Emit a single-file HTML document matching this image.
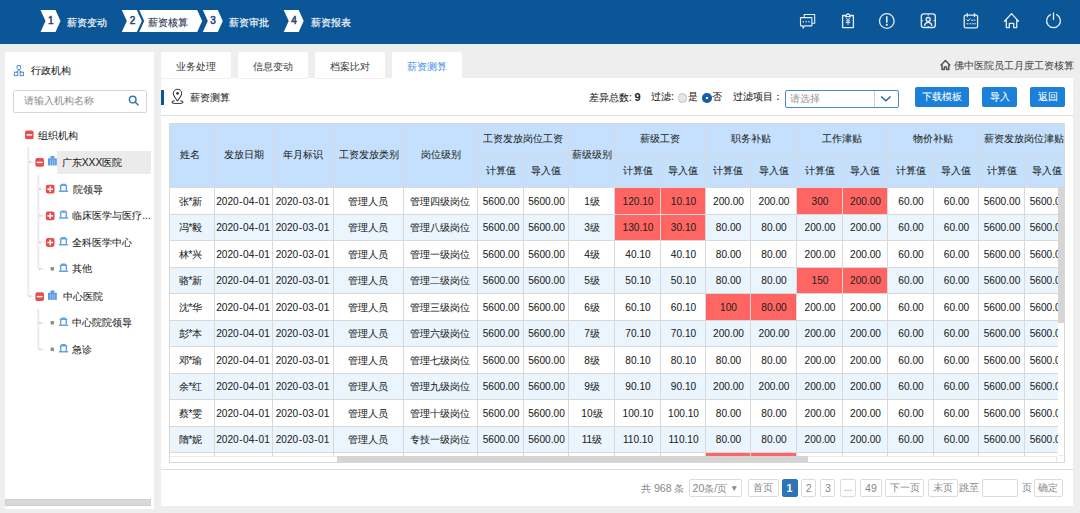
<!DOCTYPE html>
<html><head><meta charset="utf-8"><style>
html,body{margin:0;padding:0;}
body{width:1080px;height:513px;overflow:hidden;background:#eeeeee;position:relative;font-family:"Liberation Sans",sans-serif;font-size:10px;color:#222;}
.a{position:absolute;}
.t{position:absolute;white-space:nowrap;-webkit-text-stroke:0.06px currentColor;}
.n{font-size:10.6px;-webkit-text-stroke:0.05px currentColor;}
.ns,.ns .n{-webkit-text-stroke:0;}
.hy{display:inline-block;width:4.3px;text-align:center;}
.tb .n{font-size:10.15px;}
svg{position:absolute;overflow:visible;}
</style></head><body>

<div class="a" style="left:0;top:0;width:1080px;height:44px;background:#0b5697"></div>
<svg width="1080" height="44" style="left:0;top:0">
<polygon points="40.5,10 55.5,10 60.5,21.0 55.5,32 40.5,32 45.5,21.0" fill="#fff"/>
<polygon points="121.8,10 136.8,10 141.8,21.0 136.8,32 121.8,32 126.8,21.0" fill="#fff"/>
<polygon points="202.8,10 217.8,10 222.8,21.0 217.8,32 202.8,32 207.8,21.0" fill="#fff"/>
<polygon points="283.7,10 298.7,10 303.7,21.0 298.7,32 283.7,32 288.7,21.0" fill="#fff"/>
<polygon points="139.2,10 197.2,10 202.2,21 197.2,32 139.2,32 144.2,21" fill="#fff"/>
</svg>
<div class="t" style="left:40.8px;width:20px;text-align:center;top:12.6px;line-height:16px;font-size:10px;-webkit-text-stroke:0.5px currentColor;color:#1f4477">1</div>
<div class="t" style="left:67px;top:14.8px;line-height:16px;color:#fff;-webkit-text-stroke:0.15px currentColor">薪资变动</div>
<div class="t" style="left:122.60000000000002px;width:20px;text-align:center;top:12.6px;line-height:16px;font-size:10px;-webkit-text-stroke:0.5px currentColor;color:#1f4477">2</div>
<div class="t" style="left:148px;top:14.8px;line-height:16px;color:#2b3a4e;-webkit-text-stroke:0.15px currentColor">薪资核算</div>
<div class="t" style="left:203.10000000000002px;width:20px;text-align:center;top:12.6px;line-height:16px;font-size:10px;-webkit-text-stroke:0.5px currentColor;color:#1f4477">3</div>
<div class="t" style="left:229px;top:14.8px;line-height:16px;color:#fff;-webkit-text-stroke:0.15px currentColor">薪资审批</div>
<div class="t" style="left:284.0px;width:20px;text-align:center;top:12.6px;line-height:16px;font-size:10px;-webkit-text-stroke:0.5px currentColor;color:#1f4477">4</div>
<div class="t" style="left:310.5px;top:14.8px;line-height:16px;color:#fff;-webkit-text-stroke:0.15px currentColor">薪资报表</div>
<svg width="1080" height="44" style="left:0;top:0" fill="none" stroke="#e8eef6" stroke-width="1.3" stroke-linejoin="round" stroke-linecap="round">
<path d="M804.2,16.8 V14.5 H814.7 V23.3 H812.3" stroke-width="1.1"/>
<path d="M800.9,17.6 H811.6 Q811.9,17.6 811.9,17.9 V25.6 Q811.9,25.9 811.6,25.9 H804.6 L803,28.2 V25.9 H800.9 Q800.5,25.9 800.5,25.6 V17.9 Q800.5,17.6 800.9,17.6 Z" stroke-width="1.1"/>
</svg>
<svg width="1080" height="44" style="left:0;top:0" fill="#e8eef6">
<circle cx="803.3" cy="21.8" r="0.75"/>
<circle cx="806.1" cy="21.8" r="0.75"/>
<circle cx="808.9" cy="21.8" r="0.75"/>
</svg>
<svg width="1080" height="44" style="left:0;top:0" fill="none" stroke="#e8eef6" stroke-width="1.3" stroke-linejoin="round" stroke-linecap="round">
<path d="M845.5,15.5 H842.6 V27.6 H853.4 V15.5 H850.5"/>
<path d="M845.5,16.6 L846.5,14.8 Q848,12.8 849.5,14.8 L850.5,16.6 Z"/>
<path d="M846.4,18.2 L848,20.4 L849.6,18.2 M848,20.4 V24.6 M846.2,20.9 H849.8 M846.2,22.6 H849.8" stroke-width="0.9"/>
<circle cx="886.8" cy="21" r="7.3"/>
<path d="M886.8,16.8 V22.2" stroke-width="1.6"/>
<circle cx="886.8" cy="24.8" r="0.5" stroke-width="1.2"/>
<rect x="921.3" y="13.9" width="14" height="13.6" rx="2.6"/>
<circle cx="928.2" cy="19.5" r="2"/>
<path d="M924.6,25.4 Q925.2,22.3 928.2,22.3 Q931.2,22.3 931.8,25.4"/>
<path d="M928.2,14.2 V15.3 M921.6,20.7 H922.7 M935,20.7 H933.9 M928.2,27.3 V26.4" stroke-width="1"/>
<rect x="964.2" y="15.2" width="13.4" height="12.6" rx="1.6"/>
<path d="M967.3,13.6 V16.6 M974.5,13.6 V16.6" />
<path d="M966.8,19.8 L968,21 L970,18.8 M971.5,20.2 H972.6 M974,20.2 H975.1 M966.8,23.8 H968 M969.8,23.8 H970.9 M972.6,23.8 H973.7 M975,23.8 H975.6" stroke-width="1"/>
<path d="M1004.5,21.2 L1011.5,13.6 L1018.5,21.2 M1006.3,19.5 V27.6 H1009.3 V23.4 H1013.7 V27.6 H1016.7 V19.5"/>
<path d="M1050.4,14.6 A6.9,6.9 0 1,0 1056.6,14.6" stroke-width="1.3"/>
<path d="M1053.5,12.9 V19.6" stroke-width="1.3"/>
</svg>
<div class="a" style="left:5px;top:52px;width:149px;height:457px;background:#fff"></div>
<svg width="160" height="120" style="left:0;top:0" fill="none" stroke="#4f8cc9" stroke-width="1">
<path d="M17.1,65.6 H20.6 V68.4 Q20.6,69.6 18.85,69.6 Q17.1,69.6 17.1,68.4 Z"/><rect x="14.4" y="72.2" width="3.3" height="3.4"/><rect x="20.1" y="72.2" width="3.3" height="3.4"/>
<path d="M18.85,69.6 V70.4 L16.2,72.2 M18.85,70.4 L21.6,72.2"/>
</svg>
<div class="t" style="left:31px;top:63px;line-height:16px;font-size:10.3px;color:#222">行政机构</div>
<div class="a" style="left:12.5px;top:90px;width:132px;height:20.5px;border:1px solid #d6d6d6;border-radius:2px;background:#fff"></div>
<div class="t ns" style="left:24.3px;top:93px;line-height:16px;font-size:10.3px;color:#8a8a8a">请输入机构名称</div>
<svg width="160" height="120" style="left:0;top:0" fill="none" stroke="#3a78b8" stroke-width="1.5" stroke-linecap="round">
<circle cx="132.7" cy="99.6" r="3.3"/><path d="M135.2,102.1 L138.2,105"/>
</svg>
<div class="a" style="left:57px;top:151px;width:94px;height:23px;background:#ebebeb"></div>
<svg width="160" height="513" style="left:0;top:0"><rect x="27.3" y="147" width="2" height="149.5" fill="#ececec"/><rect x="37.3" y="174" width="2" height="95" fill="#ececec"/><rect x="37.3" y="309" width="2" height="40.5" fill="#ececec"/><rect x="29.3" y="161.4" width="5.5" height="1.2" fill="#efefef"/><rect x="29" y="161" width="2.2" height="2" fill="#f8caca"/><rect x="29.3" y="295.7" width="5.5" height="1.2" fill="#efefef"/><rect x="29" y="295.3" width="2.2" height="2" fill="#f8caca"/><rect x="39.3" y="188.4" width="5.5" height="1.2" fill="#efefef"/><rect x="39" y="188" width="2.2" height="2" fill="#f8caca"/><rect x="39.3" y="215.1" width="5.5" height="1.2" fill="#efefef"/><rect x="39" y="214.7" width="2.2" height="2" fill="#f8caca"/><rect x="39.3" y="241.70000000000002" width="5.5" height="1.2" fill="#efefef"/><rect x="39" y="241.3" width="2.2" height="2" fill="#f8caca"/><rect x="39.3" y="268.2" width="5.5" height="1.2" fill="#efefef"/><rect x="39" y="267.8" width="2.2" height="2" fill="#f8caca"/><rect x="39.3" y="322.2" width="5.5" height="1.2" fill="#efefef"/><rect x="39" y="321.8" width="2.2" height="2" fill="#f8caca"/><rect x="39.3" y="348.7" width="5.5" height="1.2" fill="#efefef"/><rect x="39" y="348.3" width="2.2" height="2" fill="#f8caca"/><rect x="25" y="130.5" width="8.6" height="8.8" rx="1.8" fill="#e45050"/><rect x="26.5" y="134.2" width="5.6" height="1.4" fill="#fff"/><rect x="35.4" y="158" width="8.6" height="8.8" rx="1.8" fill="#e45050"/><rect x="36.9" y="161.7" width="5.6" height="1.4" fill="#fff"/><rect x="50.5" y="156" width="3.9" height="2.4" fill="#5b9be0"/><rect x="48" y="158.3" width="8.8" height="7.1" fill="#5b9be0"/><rect x="50.3" y="159.6" width="0.6" height="5.8" fill="#b9d6f3"/><rect x="52.3" y="159.6" width="0.6" height="5.8" fill="#b9d6f3"/><rect x="54.3" y="159.6" width="0.6" height="5.8" fill="#b9d6f3"/><rect x="45.9" y="184.8" width="8.6" height="8.8" rx="1.8" fill="#e45050"/><rect x="47.4" y="188.5" width="5.6" height="1.4" fill="#fff"/><rect x="49.5" y="186.4" width="1.4" height="5.6" fill="#fff"/><polygon points="61.699999999999996,183.8 65.3,183.8 67.9,186.10000000000002 59.1,186.10000000000002" fill="#62a1e2"/><rect x="60.0" y="185.8" width="1.4" height="5" fill="#62a1e2"/><rect x="65.6" y="185.8" width="1.4" height="5" fill="#62a1e2"/><rect x="58.8" y="190.60000000000002" width="9.4" height="1.5" rx="0.7" fill="#62a1e2"/><rect x="45.9" y="211.5" width="8.6" height="8.8" rx="1.8" fill="#e45050"/><rect x="47.4" y="215.2" width="5.6" height="1.4" fill="#fff"/><rect x="49.5" y="213.1" width="1.4" height="5.6" fill="#fff"/><polygon points="61.699999999999996,210.5 65.3,210.5 67.9,212.8 59.1,212.8" fill="#62a1e2"/><rect x="60.0" y="212.5" width="1.4" height="5" fill="#62a1e2"/><rect x="65.6" y="212.5" width="1.4" height="5" fill="#62a1e2"/><rect x="58.8" y="217.3" width="9.4" height="1.5" rx="0.7" fill="#62a1e2"/><rect x="45.9" y="238.10000000000002" width="8.6" height="8.8" rx="1.8" fill="#e45050"/><rect x="47.4" y="241.8" width="5.6" height="1.4" fill="#fff"/><rect x="49.5" y="239.70000000000002" width="1.4" height="5.6" fill="#fff"/><polygon points="61.699999999999996,237.10000000000002 65.3,237.10000000000002 67.9,239.40000000000003 59.1,239.40000000000003" fill="#62a1e2"/><rect x="60.0" y="239.10000000000002" width="1.4" height="5" fill="#62a1e2"/><rect x="65.6" y="239.10000000000002" width="1.4" height="5" fill="#62a1e2"/><rect x="58.8" y="243.90000000000003" width="9.4" height="1.5" rx="0.7" fill="#62a1e2"/><rect x="50.6" y="267.1" width="3.4" height="3.4" fill="#8c8c8c"/><polygon points="61.699999999999996,263.6 65.3,263.6 67.9,265.90000000000003 59.1,265.90000000000003" fill="#62a1e2"/><rect x="60.0" y="265.6" width="1.4" height="5" fill="#62a1e2"/><rect x="65.6" y="265.6" width="1.4" height="5" fill="#62a1e2"/><rect x="58.8" y="270.40000000000003" width="9.4" height="1.5" rx="0.7" fill="#62a1e2"/><rect x="50.6" y="321.1" width="3.4" height="3.4" fill="#8c8c8c"/><polygon points="61.699999999999996,317.6 65.3,317.6 67.9,319.90000000000003 59.1,319.90000000000003" fill="#62a1e2"/><rect x="60.0" y="319.6" width="1.4" height="5" fill="#62a1e2"/><rect x="65.6" y="319.6" width="1.4" height="5" fill="#62a1e2"/><rect x="58.8" y="324.40000000000003" width="9.4" height="1.5" rx="0.7" fill="#62a1e2"/><rect x="50.6" y="347.6" width="3.4" height="3.4" fill="#8c8c8c"/><polygon points="61.699999999999996,344.1 65.3,344.1 67.9,346.40000000000003 59.1,346.40000000000003" fill="#62a1e2"/><rect x="60.0" y="346.1" width="1.4" height="5" fill="#62a1e2"/><rect x="65.6" y="346.1" width="1.4" height="5" fill="#62a1e2"/><rect x="58.8" y="350.90000000000003" width="9.4" height="1.5" rx="0.7" fill="#62a1e2"/><rect x="35.4" y="292.2" width="8.6" height="8.8" rx="1.8" fill="#e45050"/><rect x="36.9" y="295.9" width="5.6" height="1.4" fill="#fff"/><rect x="50.5" y="290.5" width="3.9" height="2.4" fill="#5b9be0"/><rect x="48" y="292.8" width="8.8" height="7.1" fill="#5b9be0"/><rect x="50.3" y="294.1" width="0.6" height="5.8" fill="#b9d6f3"/><rect x="52.3" y="294.1" width="0.6" height="5.8" fill="#b9d6f3"/><rect x="54.3" y="294.1" width="0.6" height="5.8" fill="#b9d6f3"/></svg>
<div class="t" style="left:38.4px;top:127.6px;line-height:16px;font-size:10.3px;color:#222">组织机构</div>
<div class="t" style="left:61.7px;top:155.1px;line-height:16px;font-size:10.3px;color:#222">广东XXX医院</div>
<div class="t" style="left:72.5px;top:181.6px;line-height:16px;font-size:10.3px;color:#222">院领导</div>
<div class="t" style="left:72.2px;top:208.29999999999998px;line-height:16px;font-size:10.3px;color:#222">临床医学与医疗...</div>
<div class="t" style="left:72.2px;top:234.9px;line-height:16px;font-size:10.3px;color:#222">全科医学中心</div>
<div class="t" style="left:72.2px;top:261.40000000000003px;line-height:16px;font-size:10.3px;color:#222">其他</div>
<div class="t" style="left:62.6px;top:288.90000000000003px;line-height:16px;font-size:10.3px;color:#222">中心医院</div>
<div class="t" style="left:72.4px;top:315.40000000000003px;line-height:16px;font-size:10.3px;color:#222">中心院院领导</div>
<div class="t" style="left:72.4px;top:341.90000000000003px;line-height:16px;font-size:10.3px;color:#222">急诊</div>
<div class="a" style="left:5px;top:499px;width:145px;height:6px;background:#d9d9d9;border:1px solid #cfcfcf;box-sizing:border-box;width:146px;height:7px"></div>
<div class="a" style="left:161px;top:52px;width:70px;height:26px;background:#fff;border-radius:2px 2px 0 0"></div>
<div class="t ns" style="left:161px;top:58.5px;width:70px;text-align:center;line-height:16px;font-size:10.3px;color:#3a3a3a">业务处理</div>
<div class="a" style="left:238px;top:52px;width:70px;height:26px;background:#fff;border-radius:2px 2px 0 0"></div>
<div class="t ns" style="left:238px;top:58.5px;width:70px;text-align:center;line-height:16px;font-size:10.3px;color:#3a3a3a">信息变动</div>
<div class="a" style="left:315px;top:52px;width:70px;height:26px;background:#fff;border-radius:2px 2px 0 0"></div>
<div class="t ns" style="left:315px;top:58.5px;width:70px;text-align:center;line-height:16px;font-size:10.3px;color:#3a3a3a">档案比对</div>
<div class="a" style="left:392px;top:52px;width:70px;height:27px;background:#fff;border-radius:2px 2px 0 0"></div>
<div class="t ns" style="left:392px;top:58.5px;width:70px;text-align:center;line-height:16px;font-size:10.3px;color:#3d8be0">薪资测算</div>
<svg width="1080" height="100" style="left:0;top:0" fill="none" stroke="#555" stroke-width="1.5" stroke-linejoin="round">
<path d="M940.6,65.6 L945.4,60.6 L950.2,65.6 M942,64.4 V69.6 H944.3 V67 H946.5 V69.6 H948.8 V64.4"/>
</svg>
<div class="t" style="left:953.5px;top:58px;line-height:16px;font-size:10.1px;color:#444">佛中医院员工月度工资核算</div>
<div class="a" style="left:161px;top:78px;width:912px;height:428px;background:#fff"></div>
<div class="a" style="left:161px;top:77.5px;width:70px;height:1px;background:#f0f0f0"></div>
<div class="a" style="left:238px;top:77.5px;width:70px;height:1px;background:#f0f0f0"></div>
<div class="a" style="left:315px;top:77.5px;width:70px;height:1px;background:#f0f0f0"></div>
<div class="a" style="left:161px;top:90px;width:3px;height:15px;background:#0b5697"></div>
<svg width="1080" height="120" style="left:0;top:0" fill="none" stroke="#444" stroke-width="1.1">
<path d="M177.5,100.8 C174.8,97.6 173.3,95.6 173.3,93.5 A4.2,4.2 0 0,1 181.7,93.5 C181.7,95.6 180.2,97.6 177.5,100.8 Z"/>
<circle cx="177.5" cy="93.4" r="1.3" fill="#333" stroke="none"/>
<path d="M174.5,100.6 Q172,101.2 172,102.2 Q172.5,103.5 177.5,103.5 Q182.5,103.5 183,102.2 Q183,101.2 180.5,100.6"/>
</svg>
<div class="t" style="left:190px;top:89.5px;line-height:16px;font-size:10.3px;color:#222">薪资测算</div>
<div class="t" style="left:589px;top:89.3px;line-height:16px;font-size:10.1px;color:#222">差异总数: <b style="font-size:11px">9</b></div>
<div class="t" style="left:651px;top:89.3px;line-height:16px;font-size:10.1px;color:#222">过滤:</div>
<div class="a" style="left:677.8px;top:93.2px;width:9.4px;height:9.4px;border-radius:50%;background:#e6e6e6;border:1px solid #c4c4c4;box-sizing:border-box"></div>
<div class="t" style="left:688px;top:89.3px;line-height:16px;font-size:10.1px;color:#222">是</div>
<div class="a" style="left:702.4px;top:93.2px;width:9.4px;height:9.4px;border-radius:50%;background:#1560a8"></div><div class="a" style="left:706.1px;top:96.9px;width:2.1px;height:2.1px;background:#fff"></div>
<div class="t" style="left:712.4px;top:89.3px;line-height:16px;font-size:10.1px;color:#222">否</div>
<div class="t" style="left:733.3px;top:89.3px;line-height:16px;font-size:10.1px;color:#222">过滤项目：</div>
<div class="a" style="left:785.3px;top:89.5px;width:113.4px;height:18px;border:1px solid #4a86c8;border-radius:2px;box-sizing:border-box;background:#fff"></div>
<div class="a" style="left:874.3px;top:90.5px;width:1px;height:16px;background:#d0d0d0"></div>
<div class="t ns" style="left:789.7px;top:90.5px;line-height:16px;font-size:10.1px;color:#999">请选择</div>
<svg width="1080" height="120" style="left:0;top:0" fill="none" stroke="#2a5f9e" stroke-width="1.4"><path d="M881.2,96.5 L885.9,100.8 L890.6,96.5"/></svg>
<div class="t" style="left:914.5px;top:87px;width:54.299999999999955px;height:19.7px;background:#1b80d8;border-radius:2px;color:#fff;text-align:center;line-height:19.7px;font-size:10.3px">下载模板</div>
<div class="t" style="left:982.2px;top:87px;width:34.799999999999955px;height:19.7px;background:#1b80d8;border-radius:2px;color:#fff;text-align:center;line-height:19.7px;font-size:10.3px">导入</div>
<div class="t" style="left:1030.3px;top:87px;width:34.700000000000045px;height:19.7px;background:#1b80d8;border-radius:2px;color:#fff;text-align:center;line-height:19.7px;font-size:10.3px">返回</div>
<div class="a" style="left:161px;top:115px;width:912px;height:1px;background:#dedede"></div>
<div class="a" style="left:169px;top:123px;width:896px;height:340px;overflow:hidden;background:#fff">
<div class="a" style="left:0px;top:0px;width:896px;height:64px;background:#c4e0fc;"></div>
<div class="a" style="left:0px;top:64px;width:889px;height:27px;background:#fff;"></div>
<div class="a" style="left:446px;top:65px;width:45px;height:26px;background:#ff6663;"></div>
<div class="a" style="left:492px;top:65px;width:44px;height:26px;background:#ff6663;"></div>
<div class="a" style="left:628px;top:65px;width:45px;height:26px;background:#ff6663;"></div>
<div class="a" style="left:674px;top:65px;width:44px;height:26px;background:#ff6663;"></div>
<div class="t tb" style="left:-1px;top:65px;width:45px;height:27px;line-height:27px;text-align:center;overflow:hidden;">张*新</div>
<div class="t tb" style="left:45px;top:65px;width:58px;height:27px;line-height:27px;text-align:center;overflow:hidden;"><span class="n">2020<span class="hy">-</span>04<span class="hy">-</span>01</span></div>
<div class="t tb" style="left:103px;top:65px;width:61px;height:27px;line-height:27px;text-align:center;overflow:hidden;"><span class="n">2020<span class="hy">-</span>03<span class="hy">-</span>01</span></div>
<div class="t tb" style="left:164px;top:65px;width:70px;height:27px;line-height:27px;text-align:center;overflow:hidden;">管理人员</div>
<div class="t tb" style="left:234px;top:65px;width:74px;height:27px;line-height:27px;text-align:center;overflow:hidden;">管理四级岗位</div>
<div class="t tb" style="left:309px;top:65px;width:46px;height:27px;line-height:27px;text-align:center;overflow:hidden;"><span class="n">5600.00</span></div>
<div class="t tb" style="left:355px;top:65px;width:45px;height:27px;line-height:27px;text-align:center;overflow:hidden;"><span class="n">5600.00</span></div>
<div class="t tb" style="left:400px;top:65px;width:46px;height:27px;line-height:27px;text-align:center;overflow:hidden;"><span class="n">1</span>级</div>
<div class="t tb" style="left:446px;top:65px;width:46px;height:27px;line-height:27px;text-align:center;overflow:hidden;"><span class="n">120.10</span></div>
<div class="t tb" style="left:492px;top:65px;width:45px;height:27px;line-height:27px;text-align:center;overflow:hidden;"><span class="n">10.10</span></div>
<div class="t tb" style="left:537px;top:65px;width:45px;height:27px;line-height:27px;text-align:center;overflow:hidden;"><span class="n">200.00</span></div>
<div class="t tb" style="left:582px;top:65px;width:46px;height:27px;line-height:27px;text-align:center;overflow:hidden;"><span class="n">200.00</span></div>
<div class="t tb" style="left:628px;top:65px;width:46px;height:27px;line-height:27px;text-align:center;overflow:hidden;"><span class="n">300</span></div>
<div class="t tb" style="left:674px;top:65px;width:45px;height:27px;line-height:27px;text-align:center;overflow:hidden;"><span class="n">200.00</span></div>
<div class="t tb" style="left:719px;top:65px;width:46px;height:27px;line-height:27px;text-align:center;overflow:hidden;"><span class="n">60.00</span></div>
<div class="t tb" style="left:765px;top:65px;width:45px;height:27px;line-height:27px;text-align:center;overflow:hidden;"><span class="n">60.00</span></div>
<div class="t tb" style="left:810px;top:65px;width:46px;height:27px;line-height:27px;text-align:center;overflow:hidden;"><span class="n">5600.00</span></div>
<div class="a" style="left:855px;top:65px;width:34px;height:27px;overflow:hidden">
<div class="t tb" style="left:1px;top:0;width:46px;height:27px;line-height:27px;text-align:center"><span class="n">5600.00</span></div></div>
<div class="a" style="left:0px;top:91px;width:889px;height:26px;background:#eaf5fe;"></div>
<div class="a" style="left:446px;top:92px;width:45px;height:25px;background:#ff6663;"></div>
<div class="a" style="left:492px;top:92px;width:44px;height:25px;background:#ff6663;"></div>
<div class="t tb" style="left:-1px;top:92px;width:45px;height:26px;line-height:26px;text-align:center;overflow:hidden;">冯*毅</div>
<div class="t tb" style="left:45px;top:92px;width:58px;height:26px;line-height:26px;text-align:center;overflow:hidden;"><span class="n">2020<span class="hy">-</span>04<span class="hy">-</span>01</span></div>
<div class="t tb" style="left:103px;top:92px;width:61px;height:26px;line-height:26px;text-align:center;overflow:hidden;"><span class="n">2020<span class="hy">-</span>03<span class="hy">-</span>01</span></div>
<div class="t tb" style="left:164px;top:92px;width:70px;height:26px;line-height:26px;text-align:center;overflow:hidden;">管理人员</div>
<div class="t tb" style="left:234px;top:92px;width:74px;height:26px;line-height:26px;text-align:center;overflow:hidden;">管理八级岗位</div>
<div class="t tb" style="left:309px;top:92px;width:46px;height:26px;line-height:26px;text-align:center;overflow:hidden;"><span class="n">5600.00</span></div>
<div class="t tb" style="left:355px;top:92px;width:45px;height:26px;line-height:26px;text-align:center;overflow:hidden;"><span class="n">5600.00</span></div>
<div class="t tb" style="left:400px;top:92px;width:46px;height:26px;line-height:26px;text-align:center;overflow:hidden;"><span class="n">3</span>级</div>
<div class="t tb" style="left:446px;top:92px;width:46px;height:26px;line-height:26px;text-align:center;overflow:hidden;"><span class="n">130.10</span></div>
<div class="t tb" style="left:492px;top:92px;width:45px;height:26px;line-height:26px;text-align:center;overflow:hidden;"><span class="n">30.10</span></div>
<div class="t tb" style="left:537px;top:92px;width:45px;height:26px;line-height:26px;text-align:center;overflow:hidden;"><span class="n">80.00</span></div>
<div class="t tb" style="left:582px;top:92px;width:46px;height:26px;line-height:26px;text-align:center;overflow:hidden;"><span class="n">80.00</span></div>
<div class="t tb" style="left:628px;top:92px;width:46px;height:26px;line-height:26px;text-align:center;overflow:hidden;"><span class="n">200.00</span></div>
<div class="t tb" style="left:674px;top:92px;width:45px;height:26px;line-height:26px;text-align:center;overflow:hidden;"><span class="n">200.00</span></div>
<div class="t tb" style="left:719px;top:92px;width:46px;height:26px;line-height:26px;text-align:center;overflow:hidden;"><span class="n">60.00</span></div>
<div class="t tb" style="left:765px;top:92px;width:45px;height:26px;line-height:26px;text-align:center;overflow:hidden;"><span class="n">60.00</span></div>
<div class="t tb" style="left:810px;top:92px;width:46px;height:26px;line-height:26px;text-align:center;overflow:hidden;"><span class="n">5600.00</span></div>
<div class="a" style="left:855px;top:92px;width:34px;height:26px;overflow:hidden">
<div class="t tb" style="left:1px;top:0;width:46px;height:26px;line-height:26px;text-align:center"><span class="n">5600.00</span></div></div>
<div class="a" style="left:0px;top:117px;width:889px;height:27px;background:#fff;"></div>
<div class="t tb" style="left:-1px;top:118px;width:45px;height:27px;line-height:27px;text-align:center;overflow:hidden;">林*兴</div>
<div class="t tb" style="left:45px;top:118px;width:58px;height:27px;line-height:27px;text-align:center;overflow:hidden;"><span class="n">2020<span class="hy">-</span>04<span class="hy">-</span>01</span></div>
<div class="t tb" style="left:103px;top:118px;width:61px;height:27px;line-height:27px;text-align:center;overflow:hidden;"><span class="n">2020<span class="hy">-</span>03<span class="hy">-</span>01</span></div>
<div class="t tb" style="left:164px;top:118px;width:70px;height:27px;line-height:27px;text-align:center;overflow:hidden;">管理人员</div>
<div class="t tb" style="left:234px;top:118px;width:74px;height:27px;line-height:27px;text-align:center;overflow:hidden;">管理一级岗位</div>
<div class="t tb" style="left:309px;top:118px;width:46px;height:27px;line-height:27px;text-align:center;overflow:hidden;"><span class="n">5600.00</span></div>
<div class="t tb" style="left:355px;top:118px;width:45px;height:27px;line-height:27px;text-align:center;overflow:hidden;"><span class="n">5600.00</span></div>
<div class="t tb" style="left:400px;top:118px;width:46px;height:27px;line-height:27px;text-align:center;overflow:hidden;"><span class="n">4</span>级</div>
<div class="t tb" style="left:446px;top:118px;width:46px;height:27px;line-height:27px;text-align:center;overflow:hidden;"><span class="n">40.10</span></div>
<div class="t tb" style="left:492px;top:118px;width:45px;height:27px;line-height:27px;text-align:center;overflow:hidden;"><span class="n">40.10</span></div>
<div class="t tb" style="left:537px;top:118px;width:45px;height:27px;line-height:27px;text-align:center;overflow:hidden;"><span class="n">80.00</span></div>
<div class="t tb" style="left:582px;top:118px;width:46px;height:27px;line-height:27px;text-align:center;overflow:hidden;"><span class="n">80.00</span></div>
<div class="t tb" style="left:628px;top:118px;width:46px;height:27px;line-height:27px;text-align:center;overflow:hidden;"><span class="n">200.00</span></div>
<div class="t tb" style="left:674px;top:118px;width:45px;height:27px;line-height:27px;text-align:center;overflow:hidden;"><span class="n">200.00</span></div>
<div class="t tb" style="left:719px;top:118px;width:46px;height:27px;line-height:27px;text-align:center;overflow:hidden;"><span class="n">60.00</span></div>
<div class="t tb" style="left:765px;top:118px;width:45px;height:27px;line-height:27px;text-align:center;overflow:hidden;"><span class="n">60.00</span></div>
<div class="t tb" style="left:810px;top:118px;width:46px;height:27px;line-height:27px;text-align:center;overflow:hidden;"><span class="n">5600.00</span></div>
<div class="a" style="left:855px;top:118px;width:34px;height:27px;overflow:hidden">
<div class="t tb" style="left:1px;top:0;width:46px;height:27px;line-height:27px;text-align:center"><span class="n">5600.00</span></div></div>
<div class="a" style="left:0px;top:144px;width:889px;height:26px;background:#eaf5fe;"></div>
<div class="a" style="left:628px;top:145px;width:45px;height:25px;background:#ff6663;"></div>
<div class="a" style="left:674px;top:145px;width:44px;height:25px;background:#ff6663;"></div>
<div class="t tb" style="left:-1px;top:145px;width:45px;height:26px;line-height:26px;text-align:center;overflow:hidden;">骆*新</div>
<div class="t tb" style="left:45px;top:145px;width:58px;height:26px;line-height:26px;text-align:center;overflow:hidden;"><span class="n">2020<span class="hy">-</span>04<span class="hy">-</span>01</span></div>
<div class="t tb" style="left:103px;top:145px;width:61px;height:26px;line-height:26px;text-align:center;overflow:hidden;"><span class="n">2020<span class="hy">-</span>03<span class="hy">-</span>01</span></div>
<div class="t tb" style="left:164px;top:145px;width:70px;height:26px;line-height:26px;text-align:center;overflow:hidden;">管理人员</div>
<div class="t tb" style="left:234px;top:145px;width:74px;height:26px;line-height:26px;text-align:center;overflow:hidden;">管理二级岗位</div>
<div class="t tb" style="left:309px;top:145px;width:46px;height:26px;line-height:26px;text-align:center;overflow:hidden;"><span class="n">5600.00</span></div>
<div class="t tb" style="left:355px;top:145px;width:45px;height:26px;line-height:26px;text-align:center;overflow:hidden;"><span class="n">5600.00</span></div>
<div class="t tb" style="left:400px;top:145px;width:46px;height:26px;line-height:26px;text-align:center;overflow:hidden;"><span class="n">5</span>级</div>
<div class="t tb" style="left:446px;top:145px;width:46px;height:26px;line-height:26px;text-align:center;overflow:hidden;"><span class="n">50.10</span></div>
<div class="t tb" style="left:492px;top:145px;width:45px;height:26px;line-height:26px;text-align:center;overflow:hidden;"><span class="n">50.10</span></div>
<div class="t tb" style="left:537px;top:145px;width:45px;height:26px;line-height:26px;text-align:center;overflow:hidden;"><span class="n">80.00</span></div>
<div class="t tb" style="left:582px;top:145px;width:46px;height:26px;line-height:26px;text-align:center;overflow:hidden;"><span class="n">80.00</span></div>
<div class="t tb" style="left:628px;top:145px;width:46px;height:26px;line-height:26px;text-align:center;overflow:hidden;"><span class="n">150</span></div>
<div class="t tb" style="left:674px;top:145px;width:45px;height:26px;line-height:26px;text-align:center;overflow:hidden;"><span class="n">200.00</span></div>
<div class="t tb" style="left:719px;top:145px;width:46px;height:26px;line-height:26px;text-align:center;overflow:hidden;"><span class="n">60.00</span></div>
<div class="t tb" style="left:765px;top:145px;width:45px;height:26px;line-height:26px;text-align:center;overflow:hidden;"><span class="n">60.00</span></div>
<div class="t tb" style="left:810px;top:145px;width:46px;height:26px;line-height:26px;text-align:center;overflow:hidden;"><span class="n">5600.00</span></div>
<div class="a" style="left:855px;top:145px;width:34px;height:26px;overflow:hidden">
<div class="t tb" style="left:1px;top:0;width:46px;height:26px;line-height:26px;text-align:center"><span class="n">5600.00</span></div></div>
<div class="a" style="left:0px;top:170px;width:889px;height:27px;background:#fff;"></div>
<div class="a" style="left:537px;top:171px;width:44px;height:26px;background:#ff6663;"></div>
<div class="a" style="left:582px;top:171px;width:45px;height:26px;background:#ff6663;"></div>
<div class="t tb" style="left:-1px;top:171px;width:45px;height:27px;line-height:27px;text-align:center;overflow:hidden;">沈*华</div>
<div class="t tb" style="left:45px;top:171px;width:58px;height:27px;line-height:27px;text-align:center;overflow:hidden;"><span class="n">2020<span class="hy">-</span>04<span class="hy">-</span>01</span></div>
<div class="t tb" style="left:103px;top:171px;width:61px;height:27px;line-height:27px;text-align:center;overflow:hidden;"><span class="n">2020<span class="hy">-</span>03<span class="hy">-</span>01</span></div>
<div class="t tb" style="left:164px;top:171px;width:70px;height:27px;line-height:27px;text-align:center;overflow:hidden;">管理人员</div>
<div class="t tb" style="left:234px;top:171px;width:74px;height:27px;line-height:27px;text-align:center;overflow:hidden;">管理三级岗位</div>
<div class="t tb" style="left:309px;top:171px;width:46px;height:27px;line-height:27px;text-align:center;overflow:hidden;"><span class="n">5600.00</span></div>
<div class="t tb" style="left:355px;top:171px;width:45px;height:27px;line-height:27px;text-align:center;overflow:hidden;"><span class="n">5600.00</span></div>
<div class="t tb" style="left:400px;top:171px;width:46px;height:27px;line-height:27px;text-align:center;overflow:hidden;"><span class="n">6</span>级</div>
<div class="t tb" style="left:446px;top:171px;width:46px;height:27px;line-height:27px;text-align:center;overflow:hidden;"><span class="n">60.10</span></div>
<div class="t tb" style="left:492px;top:171px;width:45px;height:27px;line-height:27px;text-align:center;overflow:hidden;"><span class="n">60.10</span></div>
<div class="t tb" style="left:537px;top:171px;width:45px;height:27px;line-height:27px;text-align:center;overflow:hidden;"><span class="n">100</span></div>
<div class="t tb" style="left:582px;top:171px;width:46px;height:27px;line-height:27px;text-align:center;overflow:hidden;"><span class="n">80.00</span></div>
<div class="t tb" style="left:628px;top:171px;width:46px;height:27px;line-height:27px;text-align:center;overflow:hidden;"><span class="n">200.00</span></div>
<div class="t tb" style="left:674px;top:171px;width:45px;height:27px;line-height:27px;text-align:center;overflow:hidden;"><span class="n">200.00</span></div>
<div class="t tb" style="left:719px;top:171px;width:46px;height:27px;line-height:27px;text-align:center;overflow:hidden;"><span class="n">60.00</span></div>
<div class="t tb" style="left:765px;top:171px;width:45px;height:27px;line-height:27px;text-align:center;overflow:hidden;"><span class="n">60.00</span></div>
<div class="t tb" style="left:810px;top:171px;width:46px;height:27px;line-height:27px;text-align:center;overflow:hidden;"><span class="n">5600.00</span></div>
<div class="a" style="left:855px;top:171px;width:34px;height:27px;overflow:hidden">
<div class="t tb" style="left:1px;top:0;width:46px;height:27px;line-height:27px;text-align:center"><span class="n">5600.00</span></div></div>
<div class="a" style="left:0px;top:197px;width:889px;height:26px;background:#eaf5fe;"></div>
<div class="t tb" style="left:-1px;top:198px;width:45px;height:26px;line-height:26px;text-align:center;overflow:hidden;">彭*本</div>
<div class="t tb" style="left:45px;top:198px;width:58px;height:26px;line-height:26px;text-align:center;overflow:hidden;"><span class="n">2020<span class="hy">-</span>04<span class="hy">-</span>01</span></div>
<div class="t tb" style="left:103px;top:198px;width:61px;height:26px;line-height:26px;text-align:center;overflow:hidden;"><span class="n">2020<span class="hy">-</span>03<span class="hy">-</span>01</span></div>
<div class="t tb" style="left:164px;top:198px;width:70px;height:26px;line-height:26px;text-align:center;overflow:hidden;">管理人员</div>
<div class="t tb" style="left:234px;top:198px;width:74px;height:26px;line-height:26px;text-align:center;overflow:hidden;">管理六级岗位</div>
<div class="t tb" style="left:309px;top:198px;width:46px;height:26px;line-height:26px;text-align:center;overflow:hidden;"><span class="n">5600.00</span></div>
<div class="t tb" style="left:355px;top:198px;width:45px;height:26px;line-height:26px;text-align:center;overflow:hidden;"><span class="n">5600.00</span></div>
<div class="t tb" style="left:400px;top:198px;width:46px;height:26px;line-height:26px;text-align:center;overflow:hidden;"><span class="n">7</span>级</div>
<div class="t tb" style="left:446px;top:198px;width:46px;height:26px;line-height:26px;text-align:center;overflow:hidden;"><span class="n">70.10</span></div>
<div class="t tb" style="left:492px;top:198px;width:45px;height:26px;line-height:26px;text-align:center;overflow:hidden;"><span class="n">70.10</span></div>
<div class="t tb" style="left:537px;top:198px;width:45px;height:26px;line-height:26px;text-align:center;overflow:hidden;"><span class="n">200.00</span></div>
<div class="t tb" style="left:582px;top:198px;width:46px;height:26px;line-height:26px;text-align:center;overflow:hidden;"><span class="n">200.00</span></div>
<div class="t tb" style="left:628px;top:198px;width:46px;height:26px;line-height:26px;text-align:center;overflow:hidden;"><span class="n">200.00</span></div>
<div class="t tb" style="left:674px;top:198px;width:45px;height:26px;line-height:26px;text-align:center;overflow:hidden;"><span class="n">200.00</span></div>
<div class="t tb" style="left:719px;top:198px;width:46px;height:26px;line-height:26px;text-align:center;overflow:hidden;"><span class="n">60.00</span></div>
<div class="t tb" style="left:765px;top:198px;width:45px;height:26px;line-height:26px;text-align:center;overflow:hidden;"><span class="n">60.00</span></div>
<div class="t tb" style="left:810px;top:198px;width:46px;height:26px;line-height:26px;text-align:center;overflow:hidden;"><span class="n">5600.00</span></div>
<div class="a" style="left:855px;top:198px;width:34px;height:26px;overflow:hidden">
<div class="t tb" style="left:1px;top:0;width:46px;height:26px;line-height:26px;text-align:center"><span class="n">5600.00</span></div></div>
<div class="a" style="left:0px;top:223px;width:889px;height:27px;background:#fff;"></div>
<div class="t tb" style="left:-1px;top:224px;width:45px;height:27px;line-height:27px;text-align:center;overflow:hidden;">邓*瑜</div>
<div class="t tb" style="left:45px;top:224px;width:58px;height:27px;line-height:27px;text-align:center;overflow:hidden;"><span class="n">2020<span class="hy">-</span>04<span class="hy">-</span>01</span></div>
<div class="t tb" style="left:103px;top:224px;width:61px;height:27px;line-height:27px;text-align:center;overflow:hidden;"><span class="n">2020<span class="hy">-</span>03<span class="hy">-</span>01</span></div>
<div class="t tb" style="left:164px;top:224px;width:70px;height:27px;line-height:27px;text-align:center;overflow:hidden;">管理人员</div>
<div class="t tb" style="left:234px;top:224px;width:74px;height:27px;line-height:27px;text-align:center;overflow:hidden;">管理七级岗位</div>
<div class="t tb" style="left:309px;top:224px;width:46px;height:27px;line-height:27px;text-align:center;overflow:hidden;"><span class="n">5600.00</span></div>
<div class="t tb" style="left:355px;top:224px;width:45px;height:27px;line-height:27px;text-align:center;overflow:hidden;"><span class="n">5600.00</span></div>
<div class="t tb" style="left:400px;top:224px;width:46px;height:27px;line-height:27px;text-align:center;overflow:hidden;"><span class="n">8</span>级</div>
<div class="t tb" style="left:446px;top:224px;width:46px;height:27px;line-height:27px;text-align:center;overflow:hidden;"><span class="n">80.10</span></div>
<div class="t tb" style="left:492px;top:224px;width:45px;height:27px;line-height:27px;text-align:center;overflow:hidden;"><span class="n">80.10</span></div>
<div class="t tb" style="left:537px;top:224px;width:45px;height:27px;line-height:27px;text-align:center;overflow:hidden;"><span class="n">80.00</span></div>
<div class="t tb" style="left:582px;top:224px;width:46px;height:27px;line-height:27px;text-align:center;overflow:hidden;"><span class="n">80.00</span></div>
<div class="t tb" style="left:628px;top:224px;width:46px;height:27px;line-height:27px;text-align:center;overflow:hidden;"><span class="n">200.00</span></div>
<div class="t tb" style="left:674px;top:224px;width:45px;height:27px;line-height:27px;text-align:center;overflow:hidden;"><span class="n">200.00</span></div>
<div class="t tb" style="left:719px;top:224px;width:46px;height:27px;line-height:27px;text-align:center;overflow:hidden;"><span class="n">60.00</span></div>
<div class="t tb" style="left:765px;top:224px;width:45px;height:27px;line-height:27px;text-align:center;overflow:hidden;"><span class="n">60.00</span></div>
<div class="t tb" style="left:810px;top:224px;width:46px;height:27px;line-height:27px;text-align:center;overflow:hidden;"><span class="n">5600.00</span></div>
<div class="a" style="left:855px;top:224px;width:34px;height:27px;overflow:hidden">
<div class="t tb" style="left:1px;top:0;width:46px;height:27px;line-height:27px;text-align:center"><span class="n">5600.00</span></div></div>
<div class="a" style="left:0px;top:250px;width:889px;height:26px;background:#eaf5fe;"></div>
<div class="t tb" style="left:-1px;top:251px;width:45px;height:26px;line-height:26px;text-align:center;overflow:hidden;">余*红</div>
<div class="t tb" style="left:45px;top:251px;width:58px;height:26px;line-height:26px;text-align:center;overflow:hidden;"><span class="n">2020<span class="hy">-</span>04<span class="hy">-</span>01</span></div>
<div class="t tb" style="left:103px;top:251px;width:61px;height:26px;line-height:26px;text-align:center;overflow:hidden;"><span class="n">2020<span class="hy">-</span>03<span class="hy">-</span>01</span></div>
<div class="t tb" style="left:164px;top:251px;width:70px;height:26px;line-height:26px;text-align:center;overflow:hidden;">管理人员</div>
<div class="t tb" style="left:234px;top:251px;width:74px;height:26px;line-height:26px;text-align:center;overflow:hidden;">管理九级岗位</div>
<div class="t tb" style="left:309px;top:251px;width:46px;height:26px;line-height:26px;text-align:center;overflow:hidden;"><span class="n">5600.00</span></div>
<div class="t tb" style="left:355px;top:251px;width:45px;height:26px;line-height:26px;text-align:center;overflow:hidden;"><span class="n">5600.00</span></div>
<div class="t tb" style="left:400px;top:251px;width:46px;height:26px;line-height:26px;text-align:center;overflow:hidden;"><span class="n">9</span>级</div>
<div class="t tb" style="left:446px;top:251px;width:46px;height:26px;line-height:26px;text-align:center;overflow:hidden;"><span class="n">90.10</span></div>
<div class="t tb" style="left:492px;top:251px;width:45px;height:26px;line-height:26px;text-align:center;overflow:hidden;"><span class="n">90.10</span></div>
<div class="t tb" style="left:537px;top:251px;width:45px;height:26px;line-height:26px;text-align:center;overflow:hidden;"><span class="n">200.00</span></div>
<div class="t tb" style="left:582px;top:251px;width:46px;height:26px;line-height:26px;text-align:center;overflow:hidden;"><span class="n">200.00</span></div>
<div class="t tb" style="left:628px;top:251px;width:46px;height:26px;line-height:26px;text-align:center;overflow:hidden;"><span class="n">200.00</span></div>
<div class="t tb" style="left:674px;top:251px;width:45px;height:26px;line-height:26px;text-align:center;overflow:hidden;"><span class="n">200.00</span></div>
<div class="t tb" style="left:719px;top:251px;width:46px;height:26px;line-height:26px;text-align:center;overflow:hidden;"><span class="n">60.00</span></div>
<div class="t tb" style="left:765px;top:251px;width:45px;height:26px;line-height:26px;text-align:center;overflow:hidden;"><span class="n">60.00</span></div>
<div class="t tb" style="left:810px;top:251px;width:46px;height:26px;line-height:26px;text-align:center;overflow:hidden;"><span class="n">5600.00</span></div>
<div class="a" style="left:855px;top:251px;width:34px;height:26px;overflow:hidden">
<div class="t tb" style="left:1px;top:0;width:46px;height:26px;line-height:26px;text-align:center"><span class="n">5600.00</span></div></div>
<div class="a" style="left:0px;top:276px;width:889px;height:27px;background:#fff;"></div>
<div class="t tb" style="left:-1px;top:277px;width:45px;height:27px;line-height:27px;text-align:center;overflow:hidden;">蔡*雯</div>
<div class="t tb" style="left:45px;top:277px;width:58px;height:27px;line-height:27px;text-align:center;overflow:hidden;"><span class="n">2020<span class="hy">-</span>04<span class="hy">-</span>01</span></div>
<div class="t tb" style="left:103px;top:277px;width:61px;height:27px;line-height:27px;text-align:center;overflow:hidden;"><span class="n">2020<span class="hy">-</span>03<span class="hy">-</span>01</span></div>
<div class="t tb" style="left:164px;top:277px;width:70px;height:27px;line-height:27px;text-align:center;overflow:hidden;">管理人员</div>
<div class="t tb" style="left:234px;top:277px;width:74px;height:27px;line-height:27px;text-align:center;overflow:hidden;">管理十级岗位</div>
<div class="t tb" style="left:309px;top:277px;width:46px;height:27px;line-height:27px;text-align:center;overflow:hidden;"><span class="n">5600.00</span></div>
<div class="t tb" style="left:355px;top:277px;width:45px;height:27px;line-height:27px;text-align:center;overflow:hidden;"><span class="n">5600.00</span></div>
<div class="t tb" style="left:400px;top:277px;width:46px;height:27px;line-height:27px;text-align:center;overflow:hidden;"><span class="n">10</span>级</div>
<div class="t tb" style="left:446px;top:277px;width:46px;height:27px;line-height:27px;text-align:center;overflow:hidden;"><span class="n">100.10</span></div>
<div class="t tb" style="left:492px;top:277px;width:45px;height:27px;line-height:27px;text-align:center;overflow:hidden;"><span class="n">100.10</span></div>
<div class="t tb" style="left:537px;top:277px;width:45px;height:27px;line-height:27px;text-align:center;overflow:hidden;"><span class="n">80.00</span></div>
<div class="t tb" style="left:582px;top:277px;width:46px;height:27px;line-height:27px;text-align:center;overflow:hidden;"><span class="n">80.00</span></div>
<div class="t tb" style="left:628px;top:277px;width:46px;height:27px;line-height:27px;text-align:center;overflow:hidden;"><span class="n">200.00</span></div>
<div class="t tb" style="left:674px;top:277px;width:45px;height:27px;line-height:27px;text-align:center;overflow:hidden;"><span class="n">200.00</span></div>
<div class="t tb" style="left:719px;top:277px;width:46px;height:27px;line-height:27px;text-align:center;overflow:hidden;"><span class="n">60.00</span></div>
<div class="t tb" style="left:765px;top:277px;width:45px;height:27px;line-height:27px;text-align:center;overflow:hidden;"><span class="n">60.00</span></div>
<div class="t tb" style="left:810px;top:277px;width:46px;height:27px;line-height:27px;text-align:center;overflow:hidden;"><span class="n">5600.00</span></div>
<div class="a" style="left:855px;top:277px;width:34px;height:27px;overflow:hidden">
<div class="t tb" style="left:1px;top:0;width:46px;height:27px;line-height:27px;text-align:center"><span class="n">5600.00</span></div></div>
<div class="a" style="left:0px;top:303px;width:889px;height:26px;background:#eaf5fe;"></div>
<div class="t tb" style="left:-1px;top:304px;width:45px;height:26px;line-height:26px;text-align:center;overflow:hidden;">隋*妮</div>
<div class="t tb" style="left:45px;top:304px;width:58px;height:26px;line-height:26px;text-align:center;overflow:hidden;"><span class="n">2020<span class="hy">-</span>04<span class="hy">-</span>01</span></div>
<div class="t tb" style="left:103px;top:304px;width:61px;height:26px;line-height:26px;text-align:center;overflow:hidden;"><span class="n">2020<span class="hy">-</span>03<span class="hy">-</span>01</span></div>
<div class="t tb" style="left:164px;top:304px;width:70px;height:26px;line-height:26px;text-align:center;overflow:hidden;">管理人员</div>
<div class="t tb" style="left:234px;top:304px;width:74px;height:26px;line-height:26px;text-align:center;overflow:hidden;">专技一级岗位</div>
<div class="t tb" style="left:309px;top:304px;width:46px;height:26px;line-height:26px;text-align:center;overflow:hidden;"><span class="n">5600.00</span></div>
<div class="t tb" style="left:355px;top:304px;width:45px;height:26px;line-height:26px;text-align:center;overflow:hidden;"><span class="n">5600.00</span></div>
<div class="t tb" style="left:400px;top:304px;width:46px;height:26px;line-height:26px;text-align:center;overflow:hidden;"><span class="n">11</span>级</div>
<div class="t tb" style="left:446px;top:304px;width:46px;height:26px;line-height:26px;text-align:center;overflow:hidden;"><span class="n">110.10</span></div>
<div class="t tb" style="left:492px;top:304px;width:45px;height:26px;line-height:26px;text-align:center;overflow:hidden;"><span class="n">110.10</span></div>
<div class="t tb" style="left:537px;top:304px;width:45px;height:26px;line-height:26px;text-align:center;overflow:hidden;"><span class="n">80.00</span></div>
<div class="t tb" style="left:582px;top:304px;width:46px;height:26px;line-height:26px;text-align:center;overflow:hidden;"><span class="n">80.00</span></div>
<div class="t tb" style="left:628px;top:304px;width:46px;height:26px;line-height:26px;text-align:center;overflow:hidden;"><span class="n">200.00</span></div>
<div class="t tb" style="left:674px;top:304px;width:45px;height:26px;line-height:26px;text-align:center;overflow:hidden;"><span class="n">200.00</span></div>
<div class="t tb" style="left:719px;top:304px;width:46px;height:26px;line-height:26px;text-align:center;overflow:hidden;"><span class="n">60.00</span></div>
<div class="t tb" style="left:765px;top:304px;width:45px;height:26px;line-height:26px;text-align:center;overflow:hidden;"><span class="n">60.00</span></div>
<div class="t tb" style="left:810px;top:304px;width:46px;height:26px;line-height:26px;text-align:center;overflow:hidden;"><span class="n">5600.00</span></div>
<div class="a" style="left:855px;top:304px;width:34px;height:26px;overflow:hidden">
<div class="t tb" style="left:1px;top:0;width:46px;height:26px;line-height:26px;text-align:center"><span class="n">5600.00</span></div></div>
<div class="a" style="left:0px;top:329px;width:889px;height:4px;background:#fff;"></div>
<div class="a" style="left:537px;top:330px;width:44px;height:3px;background:#ff6663;"></div>
<div class="a" style="left:582px;top:330px;width:45px;height:3px;background:#ff6663;"></div>
<div class="a" style="left:0px;top:0px;width:896px;height:1px;background:#d9d9d9;"></div>
<div class="a" style="left:308px;top:32px;width:547px;height:1px;background:#d9d9d9;"></div>
<div class="a" style="left:445px;top:32px;width:451px;height:1px;background:#d9d9d9;"></div>
<div class="a" style="left:0px;top:64px;width:896px;height:1px;background:#d9d9d9;"></div>
<div class="a" style="left:0px;top:91px;width:889px;height:1px;background:#d9d9d9;"></div>
<div class="a" style="left:0px;top:117px;width:889px;height:1px;background:#d9d9d9;"></div>
<div class="a" style="left:0px;top:144px;width:889px;height:1px;background:#d9d9d9;"></div>
<div class="a" style="left:0px;top:170px;width:889px;height:1px;background:#d9d9d9;"></div>
<div class="a" style="left:0px;top:197px;width:889px;height:1px;background:#d9d9d9;"></div>
<div class="a" style="left:0px;top:223px;width:889px;height:1px;background:#d9d9d9;"></div>
<div class="a" style="left:0px;top:250px;width:889px;height:1px;background:#d9d9d9;"></div>
<div class="a" style="left:0px;top:276px;width:889px;height:1px;background:#d9d9d9;"></div>
<div class="a" style="left:0px;top:303px;width:889px;height:1px;background:#d9d9d9;"></div>
<div class="a" style="left:0px;top:329px;width:889px;height:1px;background:#d9d9d9;"></div>
<div class="a" style="left:0px;top:0px;width:1px;height:340px;background:#d9d9d9;"></div>
<div class="a" style="left:45px;top:0px;width:1px;height:64px;background:#d9d9d9;"></div>
<div class="a" style="left:45px;top:64px;width:1px;height:269px;background:#d9d9d9;"></div>
<div class="a" style="left:103px;top:0px;width:1px;height:64px;background:#d9d9d9;"></div>
<div class="a" style="left:103px;top:64px;width:1px;height:269px;background:#d9d9d9;"></div>
<div class="a" style="left:164px;top:0px;width:1px;height:64px;background:#d9d9d9;"></div>
<div class="a" style="left:164px;top:64px;width:1px;height:269px;background:#d9d9d9;"></div>
<div class="a" style="left:234px;top:0px;width:1px;height:64px;background:#d9d9d9;"></div>
<div class="a" style="left:234px;top:64px;width:1px;height:269px;background:#d9d9d9;"></div>
<div class="a" style="left:308px;top:0px;width:1px;height:64px;background:#d9d9d9;"></div>
<div class="a" style="left:308px;top:64px;width:1px;height:269px;background:#d9d9d9;"></div>
<div class="a" style="left:354px;top:32px;width:1px;height:32px;background:#d9d9d9;"></div>
<div class="a" style="left:354px;top:64px;width:1px;height:269px;background:#d9d9d9;"></div>
<div class="a" style="left:399px;top:0px;width:1px;height:64px;background:#d9d9d9;"></div>
<div class="a" style="left:399px;top:64px;width:1px;height:269px;background:#d9d9d9;"></div>
<div class="a" style="left:445px;top:0px;width:1px;height:64px;background:#d9d9d9;"></div>
<div class="a" style="left:445px;top:64px;width:1px;height:269px;background:#d9d9d9;"></div>
<div class="a" style="left:491px;top:32px;width:1px;height:32px;background:#d9d9d9;"></div>
<div class="a" style="left:491px;top:64px;width:1px;height:269px;background:#d9d9d9;"></div>
<div class="a" style="left:536px;top:0px;width:1px;height:64px;background:#d9d9d9;"></div>
<div class="a" style="left:536px;top:64px;width:1px;height:269px;background:#d9d9d9;"></div>
<div class="a" style="left:581px;top:32px;width:1px;height:32px;background:#d9d9d9;"></div>
<div class="a" style="left:581px;top:64px;width:1px;height:269px;background:#d9d9d9;"></div>
<div class="a" style="left:627px;top:0px;width:1px;height:64px;background:#d9d9d9;"></div>
<div class="a" style="left:627px;top:64px;width:1px;height:269px;background:#d9d9d9;"></div>
<div class="a" style="left:673px;top:32px;width:1px;height:32px;background:#d9d9d9;"></div>
<div class="a" style="left:673px;top:64px;width:1px;height:269px;background:#d9d9d9;"></div>
<div class="a" style="left:718px;top:0px;width:1px;height:64px;background:#d9d9d9;"></div>
<div class="a" style="left:718px;top:64px;width:1px;height:269px;background:#d9d9d9;"></div>
<div class="a" style="left:764px;top:32px;width:1px;height:32px;background:#d9d9d9;"></div>
<div class="a" style="left:764px;top:64px;width:1px;height:269px;background:#d9d9d9;"></div>
<div class="a" style="left:809px;top:0px;width:1px;height:64px;background:#d9d9d9;"></div>
<div class="a" style="left:809px;top:64px;width:1px;height:269px;background:#d9d9d9;"></div>
<div class="a" style="left:855px;top:32px;width:1px;height:32px;background:#d9d9d9;"></div>
<div class="a" style="left:855px;top:64px;width:1px;height:269px;background:#d9d9d9;"></div>
<div class="a" style="left:900px;top:0px;width:1px;height:64px;background:#d9d9d9;"></div>
<div class="a" style="left:900px;top:64px;width:1px;height:269px;background:#d9d9d9;"></div>
<div class="t " style="left:-1px;top:0px;width:44px;height:64px;line-height:64px;text-align:center;overflow:hidden;-webkit-text-stroke:0.05px currentColor;color:#222">姓名</div>
<div class="t " style="left:46px;top:0px;width:57px;height:64px;line-height:64px;text-align:center;overflow:hidden;-webkit-text-stroke:0.05px currentColor;color:#222">发放日期</div>
<div class="t " style="left:104px;top:0px;width:60px;height:64px;line-height:64px;text-align:center;overflow:hidden;-webkit-text-stroke:0.05px currentColor;color:#222">年月标识</div>
<div class="t " style="left:165px;top:0px;width:69px;height:64px;line-height:64px;text-align:center;overflow:hidden;-webkit-text-stroke:0.05px currentColor;color:#222">工资发放类别</div>
<div class="t " style="left:235px;top:0px;width:73px;height:64px;line-height:64px;text-align:center;overflow:hidden;-webkit-text-stroke:0.05px currentColor;color:#222">岗位级别</div>
<div class="t " style="left:400px;top:0px;width:45px;height:64px;line-height:64px;text-align:center;overflow:hidden;-webkit-text-stroke:0.05px currentColor;color:#222">薪级级别</div>
<div class="t " style="left:309px;top:0px;width:90px;height:32px;line-height:32px;text-align:center;overflow:hidden;-webkit-text-stroke:0.05px currentColor;color:#222">工资发放岗位工资</div>
<div class="t " style="left:446px;top:0px;width:90px;height:32px;line-height:32px;text-align:center;overflow:hidden;-webkit-text-stroke:0.05px currentColor;color:#222">薪级工资</div>
<div class="t " style="left:537px;top:0px;width:90px;height:32px;line-height:32px;text-align:center;overflow:hidden;-webkit-text-stroke:0.05px currentColor;color:#222">职务补贴</div>
<div class="t " style="left:628px;top:0px;width:90px;height:32px;line-height:32px;text-align:center;overflow:hidden;-webkit-text-stroke:0.05px currentColor;color:#222">工作津贴</div>
<div class="t " style="left:719px;top:0px;width:90px;height:32px;line-height:32px;text-align:center;overflow:hidden;-webkit-text-stroke:0.05px currentColor;color:#222">物价补贴</div>
<div class="t " style="left:810px;top:0px;width:90px;height:32px;line-height:32px;text-align:center;overflow:hidden;-webkit-text-stroke:0.05px currentColor;color:#222">薪资发放岗位津贴</div>
<div class="t " style="left:309px;top:32px;width:45px;height:32px;line-height:32px;text-align:center;overflow:hidden;-webkit-text-stroke:0.05px currentColor;color:#222">计算值</div>
<div class="t " style="left:355px;top:32px;width:44px;height:32px;line-height:32px;text-align:center;overflow:hidden;-webkit-text-stroke:0.05px currentColor;color:#222">导入值</div>
<div class="t " style="left:446px;top:32px;width:45px;height:32px;line-height:32px;text-align:center;overflow:hidden;-webkit-text-stroke:0.05px currentColor;color:#222">计算值</div>
<div class="t " style="left:492px;top:32px;width:44px;height:32px;line-height:32px;text-align:center;overflow:hidden;-webkit-text-stroke:0.05px currentColor;color:#222">导入值</div>
<div class="t " style="left:537px;top:32px;width:44px;height:32px;line-height:32px;text-align:center;overflow:hidden;-webkit-text-stroke:0.05px currentColor;color:#222">计算值</div>
<div class="t " style="left:582px;top:32px;width:45px;height:32px;line-height:32px;text-align:center;overflow:hidden;-webkit-text-stroke:0.05px currentColor;color:#222">导入值</div>
<div class="t " style="left:628px;top:32px;width:45px;height:32px;line-height:32px;text-align:center;overflow:hidden;-webkit-text-stroke:0.05px currentColor;color:#222">计算值</div>
<div class="t " style="left:674px;top:32px;width:44px;height:32px;line-height:32px;text-align:center;overflow:hidden;-webkit-text-stroke:0.05px currentColor;color:#222">导入值</div>
<div class="t " style="left:719px;top:32px;width:45px;height:32px;line-height:32px;text-align:center;overflow:hidden;-webkit-text-stroke:0.05px currentColor;color:#222">计算值</div>
<div class="t " style="left:765px;top:32px;width:44px;height:32px;line-height:32px;text-align:center;overflow:hidden;-webkit-text-stroke:0.05px currentColor;color:#222">导入值</div>
<div class="t " style="left:810px;top:32px;width:45px;height:32px;line-height:32px;text-align:center;overflow:hidden;-webkit-text-stroke:0.05px currentColor;color:#222">计算值</div>
<div class="t " style="left:856px;top:32px;width:44px;height:32px;line-height:32px;text-align:center;overflow:hidden;-webkit-text-stroke:0.05px currentColor;color:#222">导入值</div>
<div class="a" style="left:889px;top:64px;width:6px;height:269px;background:#fff;"></div>
<div class="a" style="left:889px;top:64px;width:6px;height:136px;background:#d5d5d5;"></div>
<div class="a" style="left:889px;top:332px;width:6px;height:1px;background:#ececec;"></div>
<div class="a" style="left:1px;top:333px;width:888px;height:6px;background:#fff;"></div>
<div class="a" style="left:1px;top:333px;width:887px;height:1px;background:#ececec;"></div>
<div class="a" style="left:168px;top:333px;width:471px;height:6px;background:#d5d5d5;"></div>
<div class="a" style="left:887px;top:333px;width:1px;height:6px;background:#e6e6e6;"></div>
<div class="a" style="left:0px;top:339px;width:896px;height:1px;background:#d9d9d9;"></div>
<div class="a" style="left:895px;top:0px;width:1px;height:340px;background:#d9d9d9;"></div>
</div>
<div class="a" style="left:161px;top:469px;width:912px;height:1px;background:#dcdcdc"></div>
<div class="t ns" style="left:641px;top:479.6px;line-height:16px;font-size:10.3px;color:#888">共 <span class="n">968</span> 条</div>
<div class="t ns" style="left:689px;top:479.3px;width:53px;height:17.4px;box-sizing:border-box;border:1px solid #dcdcdc;border-radius:2px;background:#fff;color:#888;text-align:center;line-height:16.8px;font-size:10.3px"><span class="n">20</span>条/页 <span style="font-size:8.5px;position:relative;top:-1px;color:#8a8a8a">▼</span></div>
<div class="t ns" style="left:748px;top:479.3px;width:30.700000000000045px;height:17.4px;box-sizing:border-box;border:1px solid #dcdcdc;border-radius:2px;background:#fff;color:#888;text-align:center;line-height:16.8px;font-size:10.3px">首页</div>
<div class="t ns" style="left:781.5px;top:479.3px;width:16.100000000000023px;height:17.4px;box-sizing:border-box;border:1px solid #2f74b5;border-radius:2px;background:#2f74b5;color:#fff;text-align:center;line-height:16.8px;font-size:10.3px"><b class="n">1</b></div>
<div class="t ns" style="left:801.3px;top:479.3px;width:14.700000000000045px;height:17.4px;box-sizing:border-box;border:1px solid #dcdcdc;border-radius:2px;background:#fff;color:#888;text-align:center;line-height:16.8px;font-size:10.3px"><span class="n">2</span></div>
<div class="t ns" style="left:820.3px;top:479.3px;width:15.200000000000045px;height:17.4px;box-sizing:border-box;border:1px solid #dcdcdc;border-radius:2px;background:#fff;color:#888;text-align:center;line-height:16.8px;font-size:10.3px"><span class="n">3</span></div>
<div class="t ns" style="left:839.6px;top:479.3px;width:16.799999999999955px;height:17.4px;box-sizing:border-box;border:1px solid #dcdcdc;border-radius:2px;background:#fff;color:#888;text-align:center;line-height:16.8px;font-size:10.3px">...</div>
<div class="t ns" style="left:860.3px;top:479.3px;width:21.40000000000009px;height:17.4px;box-sizing:border-box;border:1px solid #dcdcdc;border-radius:2px;background:#fff;color:#888;text-align:center;line-height:16.8px;font-size:10.3px"><span class="n">49</span></div>
<div class="t ns" style="left:885.3px;top:479.3px;width:39.200000000000045px;height:17.4px;box-sizing:border-box;border:1px solid #dcdcdc;border-radius:2px;background:#fff;color:#888;text-align:center;line-height:16.8px;font-size:10.3px">下一页</div>
<div class="t ns" style="left:928.1px;top:479.3px;width:30.100000000000023px;height:17.4px;box-sizing:border-box;border:1px solid #dcdcdc;border-radius:2px;background:#fff;color:#888;text-align:center;line-height:16.8px;font-size:10.3px">末页</div>
<div class="t ns" style="left:959.4px;top:479.6px;line-height:16px;font-size:10.3px;color:#888">跳至</div>
<div class="t ns" style="left:981.6px;top:479.3px;width:36.799999999999955px;height:17.4px;box-sizing:border-box;border:1px solid #dcdcdc;border-radius:2px;background:#fff;color:#888;text-align:center;line-height:16.8px;font-size:10.3px"></div>
<div class="t ns" style="left:1022px;top:479.6px;line-height:16px;font-size:10.3px;color:#888">页</div>
<div class="t ns" style="left:1033.6px;top:479.3px;width:29.600000000000136px;height:17.4px;box-sizing:border-box;border:1px solid #dcdcdc;border-radius:2px;background:#fff;color:#888;text-align:center;line-height:16.8px;font-size:10.3px">确定</div>
</body></html>
